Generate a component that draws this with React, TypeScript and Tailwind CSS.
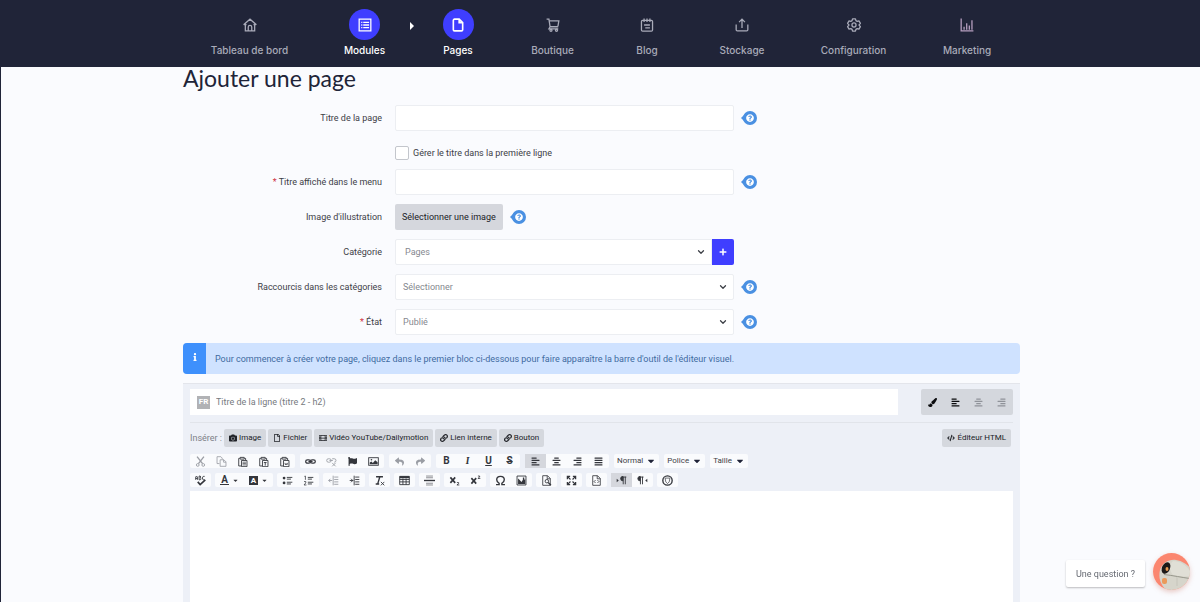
import { useState } from "react";
import type { ReactNode } from "react";
import clsx from "clsx";
import {
  FaAlignCenter,
  FaAlignJustify,
  FaAlignLeft,
  FaAlignRight,
  FaCamera,
  FaCaretDown,
  FaCode,
  FaFilm,
  FaFlag,
  FaInfo,
  FaLink,
  FaPaintBrush,
  FaPlus,
  FaQuestionCircle,
  FaRegFile,
  FaReply,
  FaShare,
} from "react-icons/fa";
import { LuChevronDown } from "react-icons/lu";

type SvgProps = { children: ReactNode; className?: string };

function Stroke({ children, className = "size-[14px]" }: SvgProps) {
  return (
    <svg
      viewBox="0 0 24 24"
      className={className}
      fill="none"
      stroke="currentColor"
      strokeWidth="2.2"
      aria-hidden="true"
    >
      {children}
    </svg>
  );
}

/* Toolbar glyphs are drawn on a 16 unit grid */
function Glyph({ children, className = "size-[11px]" }: SvgProps) {
  return (
    <svg
      viewBox="0 0 16 16"
      className={className}
      fill="none"
      stroke="currentColor"
      strokeWidth="1.3"
      aria-hidden="true"
    >
      {children}
    </svg>
  );
}

const navItems = [
  {
    label: "Tableau de bord",
    width: "w-[75px]",
    icon: (
      <Stroke>
        <path d="M1 11.5 12 2l11 9.500M4 9.500V22h16V9.500M9 22v-6.500a3 3 0 0 1 6 0V22M1.500 11.500H6M18 11.500h4.500" />
      </Stroke>
    ),
  },
  {
    label: "Modules",
    width: "w-[41px]",
    active: true,
    icon: (
      <Stroke>
        <path d="M2 2h20v20H2zM5.500 7.500h2M5.500 12h2M5.500 16.500h2M9 7.500h10M9 12h10M9 16.500h10" />
      </Stroke>
    ),
  },
  {
    label: "Pages",
    width: "w-[32px]",
    active: true,
    icon: (
      <Stroke>
        <path
          strokeWidth="2.800"
          d="M14 2H6a2 2 0 0 0-2 2v16a2 2 0 0 0 2 2h12a2 2 0 0 0 2-2V8zM14 2v6h6"
        />
      </Stroke>
    ),
  },
  {
    label: "Boutique",
    width: "w-[43px]",
    icon: (
      <Stroke>
        <path d="M1 2h4l2 13h14M5.500 5H22l-1.500 9M7 15l-2 3.500h16" />
        <circle cx="8.500" cy="21" r="1.800" />
        <circle cx="18" cy="21" r="1.800" />
      </Stroke>
    ),
  },
  {
    label: "Blog",
    width: "w-[32px]",
    icon: (
      <Stroke>
        <rect x="2.500" y="4" width="19" height="18.500" rx="2" />
        <path d="M7 1v6M12 1v6M17 1v6M7 12h10M9 17h8" />
      </Stroke>
    ),
  },
  {
    label: "Stockage",
    width: "w-[44px]",
    icon: (
      <Stroke>
        <path d="M2 11v9a2 2 0 0 0 2 2h16a2 2 0 0 0 2-2v-9M12 17V2.500M7 7l5-5 5 5" />
      </Stroke>
    ),
  },
  {
    label: "Configuration",
    width: "w-[65px]",
    icon: (
      <Stroke>
        <path
          strokeLinejoin="round"
          d="M9.500 1.500h5l.8 3 2.200 1.300 3-.8 2.500 4.200-2.200 2.300v1l2.200 2.300-2.500 4.200-3-.8-2.200 1.300-.8 3h-5l-.8-3-2.200-1.300-3 .8L1 14.800l2.200-2.300v-1L1 9.200 3.500 5l3 .8 2.200-1.300z"
        />
        <circle cx="12" cy="12" r="3.500" />
      </Stroke>
    ),
  },
  {
    label: "Marketing",
    width: "w-[48px]",
    icon: (
      <Stroke className="size-[14px] text-[#b79fc0]">
        <path d="M2 1v21h21M7 20v-5M11.500 20V9M16 20v-7M20.500 20V4" />
      </Stroke>
    ),
  },
];

function Header() {
  return (
    <header className="bg-[#202438] font-['Inter',sans-serif]">
      <nav aria-label="Navigation principale">
        <ul className="flex h-[67px] justify-center gap-[57px] pt-[9px] pl-[2px]">
          {navItems.map((item) => (
            <li key={item.label} className="flex">
              <a
                href="#"
                className={clsx(
                  "flex flex-col items-center gap-[3px] text-[10px] leading-[14px] font-medium whitespace-nowrap",
                  item.width,
                  item.active ? "text-white" : "text-[#a9abb9]",
                )}
              >
                <span
                  className={clsx(
                    "flex size-[31px] shrink-0 items-center justify-center rounded-full",
                    item.active && "bg-[#3f3eff]",
                  )}
                >
                  {item.icon}
                </span>
                {item.label}
              </a>
              {item.label === "Modules" && (
                <span className="-mr-[57px] flex h-[34px] w-[57px] items-center justify-center pr-1 text-white">
                  <svg viewBox="0 0 4 8" className="h-2 w-1" fill="currentColor" aria-hidden="true">
                    <path d="M0 0l4 4-4 4z" />
                  </svg>
                </span>
              )}
            </li>
          ))}
        </ul>
      </nav>
    </header>
  );
}

function Help() {
  return (
    <button type="button" aria-label="Aide" className="ml-[7px] flex text-white">
      <span className="relative flex">
        <svg viewBox="0 0 16 14" className="h-[14px] w-4" aria-hidden="true">
          <path d="M0 7l4.500-4.500v9z" fill="#4a90e2" />
          <circle cx="9" cy="7" r="7" fill="#4a90e2" />
        </svg>
        <FaQuestionCircle className="absolute top-[3px] left-[5px] size-2" />
      </span>
    </button>
  );
}

type FieldProps = {
  id: string;
  label: string;
  required?: boolean;
  children: ReactNode;
};

function Field({ id, label, required, children }: FieldProps) {
  return (
    <div className="flex h-[26px] items-center">
      <label htmlFor={id} className="mr-[13px] w-[199px] shrink-0 text-right">
        {required && <span className="text-[#d0303e]">* </span>}
        {label}
      </label>
      {children}
    </div>
  );
}

const fieldStyle = "h-[26px] w-full rounded-xs border border-[#eceef2] bg-white";

function Select({ id, value, joined }: { id: string; value: string; joined?: boolean }) {
  return (
    <div className="relative flex-1">
      <select
        id={id}
        className={clsx(
          fieldStyle,
          "block appearance-none text-[#85888f]",
          joined ? "rounded-r-none pl-[9px]" : "pl-[7px]",
        )}
      >
        <option>{value}</option>
      </select>
      <LuChevronDown
        strokeWidth={3}
        className="pointer-events-none absolute top-2 right-[6px] size-[10px] text-[#3c3f46]"
      />
    </div>
  );
}

function PageForm() {
  return (
    <div className="flex flex-col gap-[9px]">
      <Field id="title" label="Titre de la page">
        <div className="w-[339px]">
          <input id="title" type="text" className={fieldStyle} />
        </div>
        <Help />
      </Field>

      <div className="flex h-5 items-end pl-[212px]">
        <input
          id="first-line"
          type="checkbox"
          className="size-[14px] appearance-none rounded-xs border border-[#c3c6cc] bg-white checked:bg-[#3f3eff]"
        />
        <label htmlFor="first-line" className="ml-1 leading-[14px]">
          Gérer le titre dans la première ligne
        </label>
      </div>

      <Field id="menu-title" label="Titre affiché dans le menu" required>
        <div className="w-[339px]">
          <input id="menu-title" type="text" className={fieldStyle} />
        </div>
        <Help />
      </Field>

      <Field id="picture" label="Image d'illustration">
        <button
          id="picture"
          type="button"
          className="h-[26px] rounded-xs bg-[#d5d7dd] px-[7px] text-[#202227]"
        >
          Sélectionner une image
        </button>
        <Help />
      </Field>

      <Field id="category" label="Catégorie">
        <div className="flex w-[339px]">
          <Select id="category" value="Pages" joined />
          <button
            type="button"
            aria-label="Ajouter une catégorie"
            className="flex h-[26px] w-[22px] items-center justify-center rounded-r-xs bg-[#3f3eff] text-white"
          >
            <FaPlus className="size-2" />
          </button>
        </div>
      </Field>

      <Field id="shortcuts" label="Raccourcis dans les catégories">
        <div className="flex w-[339px]">
          <Select id="shortcuts" value="Sélectionner" />
        </div>
        <Help />
      </Field>

      <Field id="state" label="État" required>
        <div className="flex w-[339px]">
          <Select id="state" value="Publié" />
        </div>
        <Help />
      </Field>
    </div>
  );
}

type Tool = {
  name: string;
  icon: ReactNode;
  muted?: boolean;
  active?: boolean;
  wide?: boolean;
};

const clipboard = "M4 3.500H2.500v11H6M4.500 2h6v2.500h-6zM11 3.500h1.500V6M6.500 6.500h8v9h-8z";

const sheet = "M2.500 1h7l4 4v10h-11zM9 1v4.500h4.500";

const firstRow: Tool[][] = [
  [
    {
      name: "Couper",
      muted: true,
      icon: (
        <Glyph>
          <path d="M3 1l8 10M13 1L5 11" strokeWidth="2" />
          <circle cx="4" cy="13" r="2" />
          <circle cx="12" cy="13" r="2" />
        </Glyph>
      ),
    },
    {
      name: "Copier",
      muted: true,
      icon: (
        <Glyph>
          <path strokeWidth="1.200" d="M5 11H1.500V1H7l2 2v2M6 5.500h5.500l3 3V15H6zM11 5.500V9h3.500" />
        </Glyph>
      ),
    },
    {
      name: "Coller",
      icon: (
        <Glyph>
          <path d={clipboard} />
          <path strokeWidth="1" d="M8 9h5M8 11h5M8 13h5" />
        </Glyph>
      ),
    },
    {
      name: "Coller comme texte",
      icon: (
        <Glyph>
          <path d={clipboard} />
          <path d="M8.500 9.500h4M10.500 9.500V14" />
        </Glyph>
      ),
    },
    {
      name: "Coller depuis Word",
      icon: (
        <Glyph>
          <path d={clipboard} />
          <path strokeWidth="1" d="M8.500 10l1 3 1-2 1 2 1-3" />
        </Glyph>
      ),
    },
  ],
  [
    {
      name: "Lien",
      icon: (
        <Glyph>
          <rect x="1" y="5.500" width="7" height="5" rx="2.500" strokeWidth="1.800" />
          <rect x="8" y="5.500" width="7" height="5" rx="2.500" strokeWidth="1.800" />
          <path d="M5 8h6" strokeWidth="1.500" />
        </Glyph>
      ),
    },
    {
      name: "Supprimer le lien",
      muted: true,
      icon: (
        <Glyph>
          <rect x="1" y="4" width="6.500" height="5" rx="2.500" />
          <path d="M9 4h3a2.500 2.500 0 0 1 0 5M5 6.500h5M9 10l5 5M14 10l-5 5" />
        </Glyph>
      ),
    },
    { name: "Ancre", icon: <FaFlag className="size-[9px]" /> },
    {
      name: "Image",
      icon: (
        <Glyph>
          <rect x="1" y="2.500" width="14" height="11" />
          <path d="M2.500 12V9.500L5 8l2 2 3.500-4L14 9v3z" fill="currentColor" stroke="none" />
          <circle cx="5" cy="5.500" r="1.200" fill="currentColor" stroke="none" />
        </Glyph>
      ),
    },
  ],
  [
    { name: "Annuler", muted: true, icon: <FaReply className="size-[9px]" /> },
    { name: "Rétablir", muted: true, icon: <FaShare className="size-[9px]" /> },
  ],
  [
    { name: "Gras", icon: <b>B</b> },
    { name: "Italique", icon: <b className="font-serif italic">I</b> },
    { name: "Souligné", icon: <b className="underline">U</b> },
    { name: "Barré", icon: <b className="line-through">S</b> },
  ],
  [
    { name: "Aligner à gauche", active: true, icon: <FaAlignLeft className="size-[9px]" /> },
    { name: "Centrer", icon: <FaAlignCenter className="size-[9px]" /> },
    { name: "Aligner à droite", icon: <FaAlignRight className="size-[9px]" /> },
    { name: "Justifier", icon: <FaAlignJustify className="size-[9px]" /> },
  ],
];

const secondRow: Tool[][] = [
  [
    {
      name: "Orthographe",
      icon: (
        <Glyph>
          <path
            strokeWidth="1.300"
            d="M1 7V3l1.200-1.500L3.500 3v4M1 5h2.500M6 1.500V7h1.500L9 5.500 7.500 4.200 8.500 3 7.500 1.500zM14 2h-2l-1 1v3l1 1h2"
          />
          <path strokeWidth="2.400" d="M4 10l3.500 4L15 7" />
        </Glyph>
      ),
    },
  ],
  [
    {
      name: "Couleur du texte",
      wide: true,
      icon: (
        <>
          <b className="border-b border-current px-px leading-[9px]">A</b>
          <FaCaretDown className="size-[7px]" />
        </>
      ),
    },
    {
      name: "Couleur d'arrière-plan",
      wide: true,
      icon: (
        <>
          <b className="bg-[#34363c] px-[2px] text-[8px] leading-[9px] text-white">A</b>
          <FaCaretDown className="size-[7px]" />
        </>
      ),
    },
  ],
  [
    {
      name: "Liste à puces",
      icon: (
        <Glyph>
          <circle cx="3" cy="4.500" r="2" fill="currentColor" stroke="none" />
          <circle cx="3" cy="11.500" r="2" fill="currentColor" stroke="none" />
          <path d="M7 3.500h8M7 6h6M7 10.500h8M7 13h6" />
        </Glyph>
      ),
    },
    {
      name: "Liste numérotée",
      icon: (
        <Glyph>
          <path strokeWidth="1.100" d="M2 2l1.500-.5V7M1.500 9.500h2.500v2l-2.500 3H5" />
          <path d="M7 3.500h8M7 6h6M7 10.500h8M7 13h6" />
        </Glyph>
      ),
    },
  ],
  [
    {
      name: "Diminuer le retrait",
      muted: true,
      icon: (
        <Glyph>
          <path d="M9 3h6M9 6.500h6M9 10h6M9 13.500h6M7.500 1v14M6 8H1M3.500 5.500L1 8l2.500 2.500" />
        </Glyph>
      ),
    },
    {
      name: "Augmenter le retrait",
      icon: (
        <Glyph>
          <path d="M9 3h6M9 6.500h6M9 10h6M9 13.500h6M7.500 1v14M1 8h5M3 5.500L5.500 8 3 10.500" />
        </Glyph>
      ),
    },
  ],
  [
    {
      name: "Supprimer la mise en forme",
      icon: (
        <Glyph>
          <path d="M3 2.500h10M8.500 2.500l-3 10M2.500 13h5" strokeWidth="2" />
          <path d="M10 10l5 5M15 10l-5 5" />
        </Glyph>
      ),
    },
  ],
  [
    {
      name: "Tableau",
      icon: (
        <Glyph>
          <path d="M1 2h14v12H1zM1 6.500h14M1 10h14M5.700 5v9M10.300 5v9" />
          <path d="M1 3.200h14" strokeWidth="3" />
        </Glyph>
      ),
    },
  ],
  [
    {
      name: "Ligne horizontale",
      icon: (
        <Glyph>
          <path d="M3 1.500h10M3 4h10M3 12h10M3 14.500h10" opacity=".6" />
          <path d="M0 8h16" strokeWidth="2" />
        </Glyph>
      ),
    },
  ],
  [
    {
      name: "Indice",
      icon: (
        <Glyph>
          <path d="M2 3.500l7 8M9 3.500l-7 8" strokeWidth="2.400" />
          <path d="M11.500 11H14v1.500l-2.500 2H15" strokeWidth="1.200" />
        </Glyph>
      ),
    },
    {
      name: "Exposant",
      icon: (
        <Glyph>
          <path d="M2 4.500l7 8M9 4.500l-7 8" strokeWidth="2.400" />
          <path d="M11.500 1.500H14V3l-2.500 2H15" strokeWidth="1.200" />
        </Glyph>
      ),
    },
  ],
  [
    {
      name: "Caractère spécial",
      icon: (
        <Glyph>
          <path
            strokeWidth="2"
            d="M1.500 14H6v-2C3.500 10.500 2.500 9 2.500 6.800 2.500 4 4.800 2 8 2s5.500 2 5.500 4.800c0 2.200-1 3.700-3.500 5.200v2h4.500"
          />
        </Glyph>
      ),
    },
    {
      name: "Média",
      icon: (
        <Glyph>
          <path d="M1.500 1.500h13v13h-13z" />
          <path d="M3 13V5l2 2 3 3 2-3V3.500h2V7l1.500-1v7z" fill="currentColor" stroke="none" />
        </Glyph>
      ),
    },
  ],
  [
    {
      name: "Aperçu",
      icon: (
        <Glyph>
          <path d={sheet} strokeWidth="1.200" />
          <circle cx="8.500" cy="9" r="2.500" />
          <path d="M10.500 11l4 4" strokeWidth="2" />
        </Glyph>
      ),
    },
  ],
  [
    {
      name: "Agrandir",
      icon: (
        <Glyph>
          <path
            strokeWidth="1.800"
            d="M2 6V2h4M10 2h4v4M14 10v4h-4M6 14H2v-4M2 2l4.500 4.500M14 2L9.500 6.500M14 14L9.500 9.500M2 14l4.500-4.500"
          />
        </Glyph>
      ),
    },
  ],
  [
    {
      name: "Source",
      icon: (
        <Glyph>
          <path d={sheet} strokeWidth="1.200" />
          <path d="M6.500 7.500l-2 2 2 2M9.500 7.500l2 2-2 2" />
        </Glyph>
      ),
    },
  ],
  [
    {
      name: "Texte de gauche à droite",
      active: true,
      icon: (
        <Glyph>
          <path d="M1 5.500L4 8l-3 2.500z" fill="currentColor" stroke="none" />
          <path d="M10.500 2.500v11M13.500 2.500v11M9 3h6" />
          <path d="M10 2a3 3 0 0 0 0 6.500z" fill="currentColor" />
        </Glyph>
      ),
    },
    {
      name: "Texte de droite à gauche",
      icon: (
        <Glyph>
          <path d="M15 5.500L12 8l3 2.500z" fill="currentColor" stroke="none" />
          <path d="M5 2.500v11M8 2.500v11M3.500 3h6" />
          <path d="M4.500 2a3 3 0 0 0 0 6.500z" fill="currentColor" />
        </Glyph>
      ),
    },
  ],
  [
    {
      name: "Modèles",
      icon: (
        <Glyph>
          <circle cx="8" cy="8" r="6.800" strokeWidth="2" />
          <path d="M4.500 4.500h7L10.500 10 8 12.500 5.500 10z" strokeWidth="1" />
        </Glyph>
      ),
    },
  ],
];

function ToolRow({ groups, gap, children }: { groups: Tool[][]; gap: string; children?: ReactNode }) {
  return (
    <div className={clsx("flex flex-wrap", gap)}>
      {groups.map((group) => (
        <div key={group[0].name} className="flex rounded-xs bg-[#fafbfd]">
          {group.map((tool) => (
            <button
              key={tool.name}
              type="button"
              aria-label={tool.name}
              className={clsx(
                "flex h-[14px] items-center justify-center text-[10px]",
                tool.wide ? "w-[29px] gap-[3px]" : "w-[21px]",
                tool.muted ? "text-[#9a9da4]" : "text-[#34363c]",
                tool.active && "bg-[#d5d7dd]",
              )}
            >
              {tool.icon}
            </button>
          ))}
        </div>
      ))}
      {children}
    </div>
  );
}

const inserts = [
  { label: "Image", icon: <FaCamera /> },
  { label: "Fichier", icon: <FaRegFile /> },
  { label: "Vidéo YouTube/Dailymotion", icon: <FaFilm /> },
  { label: "Lien interne", icon: <FaLink /> },
  { label: "Bouton", icon: <FaLink /> },
];

const insertStyle =
  "flex h-[18px] items-center gap-[2px] rounded-xs bg-[#d5d8de] px-[5px] text-[8px] whitespace-nowrap text-[#202227]";

const rowTools = [
  { name: "Style", Icon: FaPaintBrush },
  { name: "Gauche", Icon: FaAlignLeft },
  { name: "Centre", Icon: FaAlignCenter, muted: true },
  { name: "Droite", Icon: FaAlignRight, muted: true },
];

function Editor() {
  const [content, setContent] = useState("");

  return (
    <section className="flex flex-1 flex-col border-t border-[#e3e5eb] bg-[#edf0f7] px-[7px] pt-[5px]">
      <div className="flex items-center justify-between border-b border-[#e1e4ea] pb-[7px]">
        <div className="mr-[23px] flex h-[26px] flex-1 items-center bg-white pl-[7px]">
          <span className="flex size-[13px] items-center justify-center bg-[#b1b2b5] text-[8px] font-bold text-white">
            FR
          </span>
          <input
            type="text"
            aria-label="Titre de la ligne"
            placeholder="Titre de la ligne (titre 2 - h2)"
            className="ml-[6px] h-full flex-1 placeholder:text-[#777a80]"
          />
        </div>
        <div className="flex h-[26px] items-center rounded-xs bg-[#d4d7dd] text-[#0b0c0e]">
          {rowTools.map(({ name, Icon, muted }) => (
            <button
              key={name}
              type="button"
              aria-label={name}
              className={clsx(
                "flex h-full w-[23px] items-center justify-center",
                muted && "text-[#8f9299]",
              )}
            >
              <Icon className="size-[9px]" />
            </button>
          ))}
        </div>
      </div>

      <div className="mt-[6px] flex items-center gap-[2px]">
        <span className="text-[#7d8087]">Insérer :</span>
        {inserts.map((item) => (
          <button key={item.label} type="button" className={insertStyle}>
            {item.icon}
            {item.label}
          </button>
        ))}
        <button type="button" className={clsx(insertStyle, "mr-[2px] ml-auto")}>
          <FaCode />
          Éditeur HTML
        </button>
      </div>

      <div className="mt-[7px] flex flex-col gap-[5px] pb-1">
        <ToolRow groups={firstRow} gap="gap-[5px]">
          {["Normal", "Police", "Taille"].map((name) => (
            <button
              key={name}
              type="button"
              className="flex h-[14px] items-center gap-[3px] rounded-xs bg-[#fafbfd] px-[3px] text-[8px] text-[#3f4248]"
            >
              {name}
              <FaCaretDown className="size-[10px] text-[#202438]" />
            </button>
          ))}
        </ToolRow>
        <ToolRow groups={secondRow} gap="gap-1" />
      </div>

      <textarea
        aria-label="Contenu de la page"
        value={content}
        onChange={(e) => setContent(e.target.value)}
        className="block w-full flex-1 resize-none bg-white p-2 outline-none"
      />
    </section>
  );
}

function Assistant() {
  return (
    <div className="fixed right-[10px] bottom-[12px] flex items-center gap-2">
      <button
        type="button"
        className="mt-1 h-[27px] rounded-xs bg-white px-[10px] text-[#666a72] shadow-[0_1px_2px_rgba(0,0,0,0.25)]"
      >
        Une question ?
      </button>
      <button
        type="button"
        aria-label="Assistance"
        className="size-[37px] overflow-hidden rounded-full shadow-[0_2px_5px_rgba(200,110,90,0.35)]"
      >
        <svg viewBox="0 0 37 37" aria-hidden="true">
          <rect width="37" height="37" fill="#fb866f" />
          <path d="M7 17C9 10 16 6 23 7c6 1 11 4 14 8v22H13C8 32 5 25 7 17z" fill="#d6d5cb" />
          <path d="M20 8c7 0 13 4 17 10v5c-6 1-12 0-17-1-4-5-4-10 0-14z" fill="#e0dfd6" />
          <ellipse cx="13" cy="15" rx="4" ry="6" transform="rotate(25 13 15)" fill="#1d1a18" />
          <ellipse cx="14" cy="16" rx="1.500" ry="2" fill="#e99a53" />
          <path d="M11 21.500c9 1 18 3 26 4" stroke="#97978c" fill="none" />
          <rect x="9" y="25" width="5" height="6" rx="2" fill="#ea9a5b" />
          <path d="M24 24v9" stroke="#c6c5bb" />
        </svg>
      </button>
    </div>
  );
}

function App() {
  return (
    <div className="flex min-h-screen flex-col border-l border-[#202438] bg-[#fafbfe] font-['Roboto',sans-serif] text-[9px] leading-[12px] text-[#3d4047]">
      <Header />
      <div className="flex flex-1 flex-col pl-[2px]">
        <main className="mx-auto flex w-full max-w-[837px] flex-1 flex-col">
          <h1 className="mb-4 font-['Lato',sans-serif] text-[23px] leading-[22px] text-[#202438]">
            Ajouter une page
          </h1>
          <PageForm />
          <div className="mt-2 flex h-[31px] items-stretch overflow-hidden rounded-sm bg-[#cfe2ff] text-[#416b9f]">
            <span className="flex w-[23px] items-center justify-center bg-[#3e90fc] pb-1 text-white">
              <FaInfo className="size-2" />
            </span>
            <p className="self-center pl-[9px]">
              Pour commencer à créer votre page, cliquez dans le premier bloc ci-dessous pour faire
              apparaître la barre d'outil de l'éditeur visuel.
            </p>
          </div>
          <div className="mt-[9px] flex flex-1 flex-col">
            <Editor />
          </div>
        </main>
      </div>
      <Assistant />
    </div>
  );
}

export default App;
